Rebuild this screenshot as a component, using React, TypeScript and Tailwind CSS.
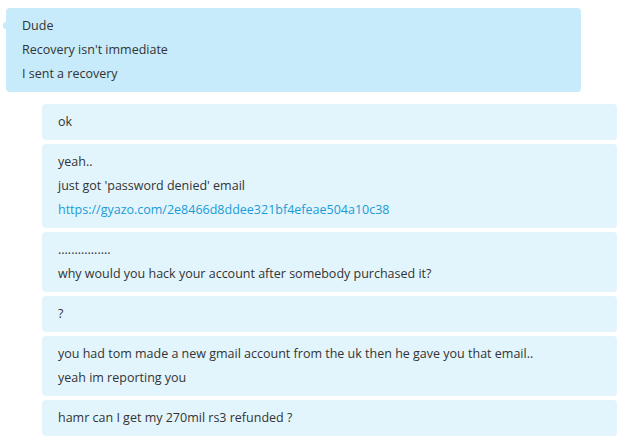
const theirs = [["Dude", "Recovery isn't immediate", "I sent a recovery"]];

type Line = string | { link: string };

const mine: Line[][] = [
  ["ok"],
  ["yeah..", "just got 'password denied' email", { link: "https://gyazo.com/2e8466d8ddee321bf4efeae504a10c38" }],
  ["................", "why would you hack your account after somebody purchased it?"],
  ["?"],
  ["you had tom made a new gmail account from the uk then he gave you that email..", "yeah im reporting you"],
  ["hamr can I get my 270mil rs3 refunded ?"],
];

function Bubble({ lines, tone }: { lines: Line[]; tone: "them" | "me" }) {
  return (
    <div className={`rounded-[4px] px-4 py-[6px] ${tone === "them" ? "bg-[#c7ebfa]" : "bg-[#e3f5fc]"}`}>
      {lines.map((l, i) => (
        <div key={i} className="h-6 leading-6 whitespace-nowrap">
          {typeof l === "string" ? l : <span className="text-[#1a9bd8]">{l.link}</span>}
        </div>
      ))}
    </div>
  );
}

export default function App() {
  return (
    <div className="w-[638px] h-[442px] bg-white overflow-hidden text-[12.5px] text-[#333333] font-['Open_Sans',sans-serif]">
      <div className="pt-2 pl-[6px] w-[581px] relative">
        <div className="absolute left-[3px] top-[22px] w-[6px] h-[7px] rounded-full bg-[#c7ebfa]" />
        {theirs.map((t, i) => (
          <Bubble key={i} lines={t} tone="them" />
        ))}
      </div>
      <div className="mt-3 ml-[42px] w-[575px] flex flex-col gap-[4px]">
        {mine.map((m, i) => (
          <Bubble key={i} lines={m} tone="me" />
        ))}
      </div>
    </div>
  );
}
